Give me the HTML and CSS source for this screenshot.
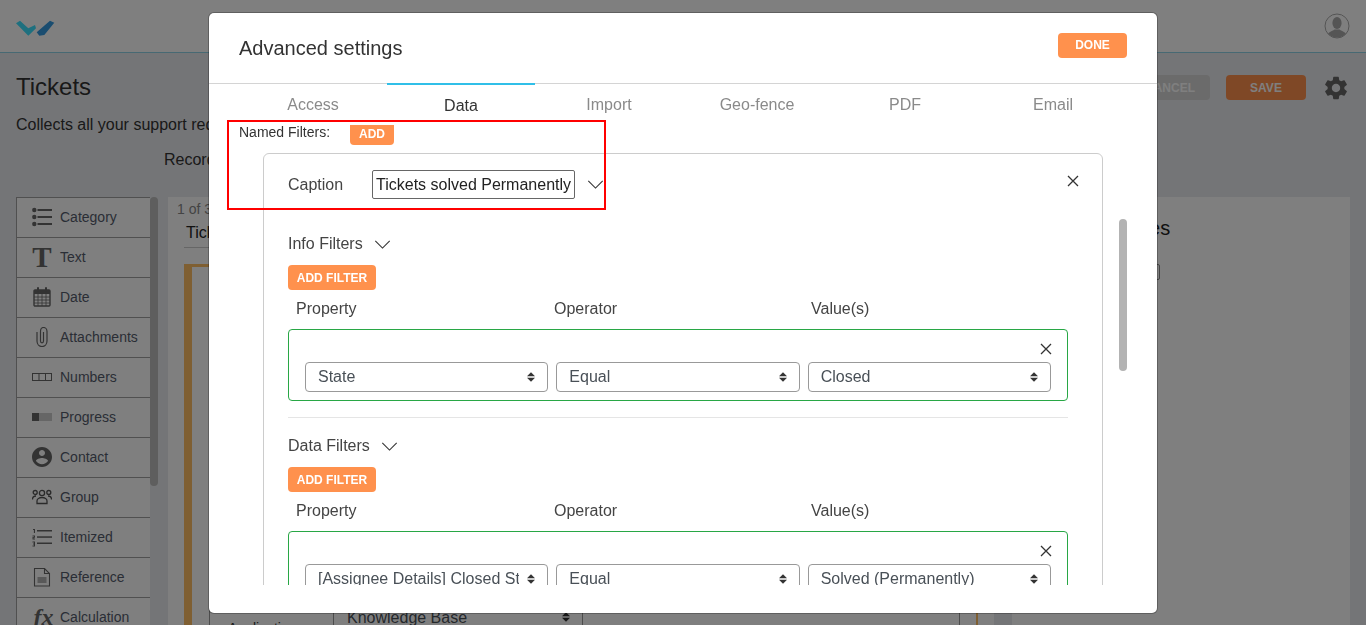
FILE: index.html
```html
<!DOCTYPE html>
<html lang="en">
<head>
<meta charset="utf-8">
<title>Advanced settings</title>
<link rel="stylesheet" href="styles.css">
</head>
<body>
<div class="app">
  <header class="topbar">
    <svg class="logo" viewBox="0 0 39 16" width="39" height="16"><path class="logo-a" d="M0 3.300 L4 .7 L12.300 8.300 L19 5 L20 8.300 L12.300 15.700 Z"/><path class="logo-b" d="M20.700 12.300 L34 .7 L38.300 2.700 L28.300 15 L23.300 15.700 Z"/></svg>
    <svg class="avatar" viewBox="0 0 26 26" width="26" height="26"><defs><clipPath id="avclip"><circle cx="13" cy="13" r="11.600"/></clipPath></defs><circle cx="13" cy="13" r="12" fill="none" stroke="#aaa" stroke-width="1"/><g clip-path="url(#avclip)"><ellipse cx="13" cy="10" rx="4.600" ry="6" fill="#aaa"/><path d="M2 26 C2 19 8 18.500 10.500 16.500 L15.500 16.500 C18 18.500 24 19 24 26 Z" fill="#aaa"/></g></svg>
  </header>
  <section class="pagehead">
    <div class="headrow">
      <h1 class="pagetitle">Tickets</h1>
      <div class="headactions">
        <button class="bgbtn bgbtn-cancel">CANCEL</button>
        <button class="bgbtn bgbtn-save">SAVE</button>
        <svg class="gear" viewBox="0 0 24 24" width="28" height="28"><path d="M19.140 12.940c.04-.3.06-.61.06-.94 0-.32-.02-.64-.07-.94l2.030-1.580c.18-.14.23-.41.12-.61l-1.920-3.320c-.12-.22-.37-.29-.59-.22l-2.390.96c-.5-.38-1.030-.7-1.620-.94l-.36-2.540c-.04-.24-.24-.41-.48-.41h-3.840c-.24 0-.43.17-.47.41l-.36 2.540c-.59.24-1.130.57-1.620.94l-2.390-.96c-.22-.08-.47 0-.59.22L2.740 8.870c-.12.21-.08.47.12.61l2.030 1.580c-.05.3-.09.63-.09.94s.02.64.07.94l-2.030 1.580c-.18.14-.23.41-.12.61l1.920 3.320c.12.22.37.29.59.22l2.390-.96c.5.38 1.030.7 1.620.94l.36 2.540c.05.24.24.41.48.41h3.840c.24 0 .44-.17.47-.41l.36-2.540c.59-.24 1.130-.56 1.620-.94l2.390.96c.22.08.47 0 .59-.22l1.920-3.320c.12-.22.07-.47-.12-.61l-2.010-1.580zM12 15.600c-1.980 0-3.600-1.620-3.600-3.600s1.620-3.600 3.600-3.600 3.600 1.620 3.600 3.600-1.620 3.600-3.600 3.600z"/></svg>
      </div>
    </div>
    <p class="pagedesc">Collects all your support requests</p>
    <p class="pagerecord">Records</p>
  </section>
  <section class="workspace">
    <div class="palette">
      <ul class="palette-list">
        <li class="pal-item"><span class="pal-icon"><svg viewBox="0 0 20 20" width="20" height="20"><circle cx="2.300" cy="3" r="2.200"/><circle cx="2.300" cy="10" r="2.200"/><circle cx="2.300" cy="17" r="2.200"/><rect x="5.500" y="2" width="14.500" height="2"/><rect x="5.500" y="9" width="14.500" height="2"/><rect x="5.500" y="16" width="14.500" height="2"/></svg></span>Category</li>
        <li class="pal-item"><span class="pal-icon pal-glyph-t">T</span>Text</li>
        <li class="pal-item"><span class="pal-icon"><svg viewBox="0 0 20 20" width="20" height="20"><rect x="2" y="3" width="16" height="16" rx="1" fill="none" stroke="#666" stroke-width="1.400"/><rect x="2" y="3" width="16" height="4"/><rect x="5" y="0" width="2" height="5" rx="1"/><rect x="13" y="0" width="2" height="5" rx="1"/><path d="M2 10h16M2 13h16M2 16h16M6 7v12M10 7v12M14 7v12" stroke="#666" stroke-width=".8" fill="none"/></svg></span>Date</li>
        <li class="pal-item"><span class="pal-icon"><svg viewBox="0 0 20 20" width="20" height="20"><path d="M5 5v9c0 3 2 5.500 5 5.500s5-2.500 5-5.500V4.500C15 2.300 13.500 .5 11.500 .5S8.500 2.300 8.500 4.500V14c0 1 .6 1.800 1.500 1.800s1.500-.8 1.500-1.800V5" fill="none" stroke="#666" stroke-width="1.200"/></svg></span>Attachments</li>
        <li class="pal-item"><span class="pal-icon"><svg viewBox="0 0 20 20" width="20" height="20"><rect x=".5" y="6.500" width="19" height="7" fill="none" stroke="#666"/><path d="M7 6.500v7M13.500 6.500v7" stroke="#666"/></svg></span>Numbers</li>
        <li class="pal-item"><span class="pal-icon"><svg viewBox="0 0 20 20" width="20" height="20"><rect x="0" y="6" width="7" height="8"/><rect x="7" y="6" width="13" height="8" fill="#ccc"/></svg></span>Progress</li>
        <li class="pal-item"><span class="pal-icon"><svg viewBox="2 2 20 20" width="20" height="20"><path d="M12 2C6.480 2 2 6.480 2 12s4.480 10 10 10 10-4.480 10-10S17.520 2 12 2zm0 3c1.660 0 3 1.340 3 3s-1.340 3-3 3-3-1.340-3-3 1.340-3 3-3zm0 14.200c-2.500 0-4.710-1.280-6-3.220.03-1.990 4-3.080 6-3.080 1.990 0 5.970 1.090 6 3.080-1.290 1.940-3.500 3.220-6 3.220z"/></svg></span>Contact</li>
        <li class="pal-item"><span class="pal-icon"><svg viewBox="0 0 20 20" width="20" height="20" fill="none" stroke="#555" stroke-width="1.300"><circle cx="10" cy="6" r="2.600"/><circle cx="3.200" cy="5.500" r="2"/><circle cx="16.800" cy="5.500" r="2"/><path d="M5 16.500v-2.500c0-2 2.200-3.500 5-3.500s5 1.500 5 3.500v2.500z"/><path d="M.5 12.500c0-2.300 1.200-3.500 3.500-3.500M19.500 12.500c0-2.300-1.200-3.500-3.500-3.500"/></svg></span>Group</li>
        <li class="pal-item"><span class="pal-icon"><svg viewBox="0 0 20 20" width="20" height="20"><rect x="5" y="3" width="15" height="1.500"/><rect x="5" y="9.300" width="15" height="1.500"/><rect x="5" y="15.500" width="15" height="1.500"/><path d="M1 2h2v4H1.900V3H1zM.5 8.500h2.500v2.300H1.500v.7H3v.9H.5V10h1.500v-.6H.5zM.5 14.500H3v5H.5v-1h1.500v-1H1v-1h1v-1H.5z"/></svg></span>Itemized</li>
        <li class="pal-item"><span class="pal-icon"><svg viewBox="0 0 20 20" width="20" height="20" fill="none" stroke="#666" stroke-width="1.100"><path d="M2.500 1.500h10l5 5v12.500H2.500z"/><path d="M12.500 1.500v5h5M5.500 11h9M5.500 13h9M5.500 15h9"/></svg></span>Reference</li>
        <li class="pal-item"><span class="pal-icon pal-glyph-fx">fx</span>Calculation</li>
      </ul>
      <div class="palette-thumb"></div>
    </div>
    <div class="canvas">
      <div class="canvas-count">1 of 3</div>
      <div class="canvas-name">Tickets</div>
      <div class="frame">
        <div class="form-row">
          <div class="form-label">Application</div>
          <div class="form-select"><span>Knowledge Base</span>
            <svg class="updown" viewBox="0 0 10 12" width="8" height="10"><path d="M5 0 L10 5 H0 Z M0 7 H10 L5 12 Z"/></svg>
          </div>
          <div class="form-rest"></div>
        </div>
      </div>
    </div>
    <aside class="sidepanel">
      <div class="side-title">Properties</div>
      <div class="side-box"></div>
    </aside>
  </section>
</div>

<div class="overlay"></div>

<div class="modal">
  <div class="modal-head">
    <h2 class="modal-title">Advanced settings</h2>
    <button class="btn btn-done">DONE</button>
  </div>
  <nav class="tabs">
    <div class="tab">Access</div>
    <div class="tab tab-active">Data</div>
    <div class="tab">Import</div>
    <div class="tab">Geo-fence</div>
    <div class="tab">PDF</div>
    <div class="tab">Email</div>
  </nav>
  <div class="modal-body">
    <div class="named-row">
      <span class="named-label">Named Filters:</span>
      <button class="btn btn-add">ADD</button>
    </div>
    <div class="card">
      <svg class="xicon card-close" viewBox="0 0 12 12" width="12" height="12"><path d="M1 1 L11 11 M11 1 L1 11"/></svg>
      <div class="caption-row">
        <label class="caption-label">Caption</label>
        <input class="caption-input" type="text" value="Tickets solved Permanently">
        <svg class="chev" viewBox="0 0 18 10" width="17" height="9"><path d="M1 1 L9 9 L17 1"/></svg>
      </div>

      <div class="filter-section filter-section-first">
        <div class="filter-title">Info Filters <svg class="chev" viewBox="0 0 18 10" width="17" height="9"><path d="M1 1 L9 9 L17 1"/></svg></div>
        <button class="btn btn-filter">ADD FILTER</button>
        <div class="col-labels"><span class="col-a">Property</span><span class="col-b">Operator</span><span>Value(s)</span></div>
        <div class="filter-box">
          <svg class="xicon box-close" viewBox="0 0 12 12" width="12" height="12"><path d="M1 1 L11 11 M11 1 L1 11"/></svg>
          <div class="select"><span class="select-text">State</span><svg class="updown" viewBox="0 0 10 12" width="8" height="10"><path d="M5 0 L10 5 H0 Z M0 7 H10 L5 12 Z"/></svg></div>
          <div class="select"><span class="select-text">Equal</span><svg class="updown" viewBox="0 0 10 12" width="8" height="10"><path d="M5 0 L10 5 H0 Z M0 7 H10 L5 12 Z"/></svg></div>
          <div class="select"><span class="select-text">Closed</span><svg class="updown" viewBox="0 0 10 12" width="8" height="10"><path d="M5 0 L10 5 H0 Z M0 7 H10 L5 12 Z"/></svg></div>
        </div>
      </div>

      <hr class="divider">

      <div class="filter-section">
        <div class="filter-title">Data Filters <svg class="chev" viewBox="0 0 18 10" width="17" height="9"><path d="M1 1 L9 9 L17 1"/></svg></div>
        <button class="btn btn-filter">ADD FILTER</button>
        <div class="col-labels"><span class="col-a">Property</span><span class="col-b">Operator</span><span>Value(s)</span></div>
        <div class="filter-box">
          <svg class="xicon box-close" viewBox="0 0 12 12" width="12" height="12"><path d="M1 1 L11 11 M11 1 L1 11"/></svg>
          <div class="select"><span class="select-text">[Assignee Details] Closed Status</span><svg class="updown" viewBox="0 0 10 12" width="8" height="10"><path d="M5 0 L10 5 H0 Z M0 7 H10 L5 12 Z"/></svg></div>
          <div class="select"><span class="select-text">Equal</span><svg class="updown" viewBox="0 0 10 12" width="8" height="10"><path d="M5 0 L10 5 H0 Z M0 7 H10 L5 12 Z"/></svg></div>
          <div class="select"><span class="select-text">Solved (Permanently)</span><svg class="updown" viewBox="0 0 10 12" width="8" height="10"><path d="M5 0 L10 5 H0 Z M0 7 H10 L5 12 Z"/></svg></div>
        </div>
      </div>
    </div>
    <div class="scroll-thumb"></div>
  </div>
</div>

<div class="annotation"></div>
</body>
</html>
```
FILE: styles.css
```css
* { box-sizing: border-box; }
html, body { height: 100%; }
body {
  margin: 0;
  overflow: hidden;
  background: #e9ebee;
  font-family: "Liberation Sans", Arial, sans-serif;
  color: #333;
}

/* background application */
.app { height: 625px; overflow: hidden; }
.topbar {
  height: 53px;
  background: #fff;
  border-bottom: 1px solid #8fd3e6;
  display: flex;
  align-items: center;
  justify-content: space-between;
  padding: 0 16px 0 16px;
}
.logo { margin-top: 4px; }
.logo-a { fill: #3ce0ff; }
.logo-b { fill: #349ae0; }

.pagehead { padding: 22px 16px 0; height: 144px; }
.headrow { display: flex; justify-content: space-between; align-items: center; height: 25px; }
.pagetitle { margin: -2px 0 0; font-size: 24px; font-weight: 400; color: #333; }
.headactions { display: flex; align-items: center; gap: 16px; }
.bgbtn {
  height: 25px; border: 0; border-radius: 4px;
  font: bold 12px "Liberation Sans", Arial, sans-serif;
  color: #fff; padding: 0;
}
.bgbtn-cancel { width: 80px; background: #d6d6d6; }
.bgbtn-save { width: 80px; background: #ff914d; }
.gear { fill: #666; }
.pagedesc { margin: 15px 0 0; font-size: 16px; line-height: 20px; color: #333; }
.pagerecord { margin: 15px 0 0 148px; font-size: 16px; line-height: 20px; color: #333; }

.workspace { display: flex; height: 428px; padding: 0 16px; overflow: hidden; }
.palette { display: flex; width: 142px; flex: none; align-items: flex-start; }
.palette-list {
  list-style: none; margin: 0; padding: 0;
  width: 134px; flex: none;
  border-left: 1px solid #a0a0a0;
}
.pal-item {
  height: 40px;
  background: #fff;
  border-top: 1px solid #a0a0a0;
  display: flex; align-items: center;
  font-size: 14px; color: #555c6c;
  padding: 0 0 1px 15px;
}
.pal-icon {
  width: 20px; height: 20px; margin-right: 8px; flex: none;
  display: flex; align-items: center; justify-content: center;
  fill: #666;
}
.pal-glyph-t { font: bold 29px/20px "Liberation Serif", serif; color: #666; }
.pal-glyph-fx { font: italic bold 24px/20px "Liberation Serif", serif; color: #666; padding-left: 3px; }
.palette-thumb { width: 8px; height: 289px; flex: none; background: #bcbcbc; border-radius: 4px; }

.canvas {
  width: 826px; margin-left: 10px; flex: none;
  background: #fff;
  padding: 0 16px 0 16px;
}
.canvas-count { margin: 4px 0 0 -7px; font-size: 14px; line-height: 16px; color: #888; }
.canvas-name {
  margin-top: 7px; padding: 0 0 5px 2px;
  font-size: 16px; line-height: 18px; color: #222;
  border-bottom: 1px solid #ccc;
  width: 500px;
}
.frame {
  margin-top: 16px; width: 794px; height: 600px;
  border-left: 8px solid #ffbe64;
  border-right: 2px solid #ffbe64;
  border-top: 3px solid #ffbe64;
  padding: 341px 17px 0;
  background: #fff;
}
.form-row { display: flex; height: 60px; border-left: 1px solid #999; width: 751px; }
.form-label { width: 124px; padding: 12px 0 0 18px; font-size: 14px; color: #333; border-right: 1px solid #999; }
.form-select {
  width: 249px; display: flex; align-items: flex-start; justify-content: space-between;
  padding: 0 12px 0 13px; font-size: 16px; line-height: 19px; color: #495057;
  border-right: 1px solid #999;
}
.form-select .updown { margin-top: 4px; }
.form-rest { flex: 1; border-right: 1px solid #999; }

.sidepanel { width: 338px; margin-left: 18px; flex: none; background: #fff; padding: 20px 0 0 67px; }
.side-title { font-size: 20px; line-height: 22px; color: #222; }
.side-box { margin-top: 25px; width: 81px; height: 16px; border: 1px solid #888; border-radius: 2px; }

.updown { fill: #333; flex: none; }

.overlay { position: fixed; inset: 0; background: rgba(0, 0, 0, .5); }

/* modal */
.modal {
  position: absolute; left: 209px; top: 13px;
  width: 948px; height: 600px;
  background: #fff; border-radius: 5px;
  box-shadow: 0 0 0 1px rgba(0, 0, 0, .25);
}
.modal-head {
  height: 71px; padding: 0 30px;
  display: flex; align-items: center; justify-content: space-between;
  border-bottom: 1px solid #d4d4d4;
}
.modal-title { margin: 1px 0 0; font-size: 20px; font-weight: 400; color: #333; }
.btn {
  height: 25px; border: 0; border-radius: 4px; padding: 0;
  background: #ff914d; color: #fff;
  font: bold 12px "Liberation Sans", Arial, sans-serif;
}
.btn-done { width: 69px; margin-top: -6px; }
.btn-add { width: 44px; padding-top: 2px; }
.btn-filter { display: block; width: 88px; margin-top: 12px; }

.tabs { display: flex; height: 41px; padding: 0 30px; }
.tab {
  flex: 1; text-align: center; font-size: 16px; line-height: 19px;
  padding-top: 11px; color: #8a8a8a;
}
.tab-active { color: #333; border-top: 2px solid #30bfe8; margin-top: -1px; padding-top: 11px; }

.modal-body { position: relative; height: 460px; overflow: hidden; padding-left: 30px; }
.named-row { display: flex; align-items: center; height: 25px; margin-top: -5px; }
.named-label { width: 111px; font-size: 14px; color: #333; margin-top: -1px; line-height: 16px; }

.card {
  position: relative;
  width: 840px; margin: 8px 0 0 24px;
  padding: 16px 34px 40px 24px;
  border: 1px solid #ccc; border-radius: 6px;
}
.xicon { fill: none; stroke: #333; stroke-width: 1.3; position: absolute; }
.card-close { right: 23px; top: 21px; }
.caption-row { display: flex; align-items: center; height: 29px; }
.caption-label { width: 84px; font-size: 16px; color: #444; }
.caption-input {
  width: 203px; height: 29px; padding: 0 3px;
  border: 1px solid #666; border-radius: 2px;
  font: 16px "Liberation Sans", Arial, sans-serif; color: #222;
  background: #fff; outline: 0;
}
.chev { fill: none; stroke: #333; stroke-width: 1.2; flex: none; }
.caption-row .chev { margin-left: 12px; }

.filter-section-first { margin-top: 34px; }
.filter-title { display: flex; align-items: center; gap: 11px; height: 20px; padding-top: 2px; font-size: 16px; color: #444; }
.col-labels { display: flex; margin-top: 8px; padding-left: 8px; height: 20px; font-size: 16px; line-height: 22px; color: #444; }
.col-a { width: 258px; }
.col-b { width: 257px; }
.filter-box {
  position: relative; display: flex; gap: 8px;
  margin-top: 11px; padding: 32px 16px 8px;
  border: 1px solid #28a745; border-radius: 4px;
}
.box-close { right: 15px; top: 13px; }
.select {
  flex: 1; min-width: 0; height: 30px;
  display: flex; align-items: center;
  border: 1px solid #999; border-radius: 4px;
  padding: 0 12px 0 12px;
  font-size: 16px; color: #495057;
}
.select-text { flex: 1; min-width: 0; overflow: hidden; white-space: nowrap; margin-right: 8px; }
.divider { margin: 16px 0 17px; border: 0; border-top: 1px solid #e5e5e5; }

.scroll-thumb {
  position: absolute; left: 910px; top: 94px;
  width: 8px; height: 152px; border-radius: 4px; background: #b3b3b3;
}

.annotation {
  position: absolute; left: 227px; top: 120px;
  width: 379px; height: 90px;
  border: 2px solid #f00;
}
```
